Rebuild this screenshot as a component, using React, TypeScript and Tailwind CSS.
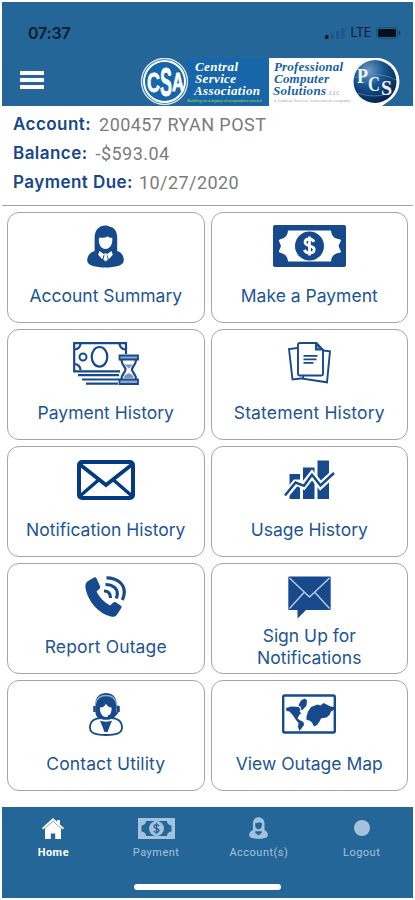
import type { ReactNode } from "react";

const NAVY = "#17498d";

function AccountIcon() {
  return (
    <svg width="37" height="43" viewBox="0 0 37 43" fill={NAVY}>
      <path d="M7.6 26V13C7.6 5 12 .4 18.500 .4c2 0 3 .6 3.800 1.200C27 2.200 30.200 6 30.200 13v13c4 1 6.600 4.500 6.600 9.500 0 5-9 7-18.300 7S.2 40.500.2 35.500C.2 30.500 3.600 27 7.600 26z" />
      <path
        d="M12 12.800c4 .2 7.500-.4 8.800-1.600 1 1.200 2.600 1.700 4.400 1.600.8 5.500-1.800 11.300-6.700 11.300S11.200 18.300 12 12.800z"
        fill="#fff"
      />
      <path d="M12.500 26l4.500 3.200-1.800 5-4-4.500zM24.500 26L20 29.200l1.800 5 4-4.500z" fill="#fff" />
      <path d="M17 28.500h3.200l-.5 2 1.200 4-2.300 2-2.300-2 1.200-4z" fill="#fff" />
    </svg>
  );
}

function MoneyIcon() {
  return (
    <svg width="73" height="42" viewBox="0 0 73 42">
      <rect width="73" height="42" rx="2" fill={NAVY} />
      <path
        d="M15 5.500h43c.3 4.500 2.500 7.500 7 8.500 1 0 3 .5 3 1.500l-2.500 5.500 2.500 5.500c0 1-2 1.500-3 1.500-4.500 1-6.700 4-7 8.500H15c-.3-4.500-2.500-7.500-7-8.500-1.500-.5-2.500-1-2-2l2-5-2-5c-.5-1 .5-1.500 2-2 4.500-1 6.700-4 7-8.500z"
        fill="#fff"
      />
      <circle cx="36.500" cy="21" r="14.500" fill={NAVY} />
      <path
        d="M41 16.800c-1-2-2.700-2.800-4.700-2.800-2.500 0-4.300 1.300-4.300 3.300 0 4.700 9.200 2.500 9.200 7.200 0 2.200-2 3.500-4.700 3.500-2.500 0-4.200-1-5.200-3.200M36.500 11.500v19"
        fill="none"
        stroke="#fff"
        strokeWidth="2.800"
      />
    </svg>
  );
}

function PaymentHistoryIcon() {
  return (
    <svg width="66" height="43" viewBox="0 0 66 43" fill="none" stroke={NAVY}>
      <path d="M1.200 28V1.200H53V12M1.200 28v1.300H47" strokeWidth="2.200" />
      <path
        d="M1.500 7.500c3.500 0 6-2.500 6-6M46.500 1.500c0 3.500 2.500 6 6 6M1.500 22c3.500 0 6 2.500 6 6"
        fill="#8ba6c8"
        strokeWidth="2.200"
      />
      <circle cx="10" cy="15" r="3.500" strokeWidth="2" />
      <ellipse cx="26.500" cy="14.800" rx="7.800" ry="9.800" strokeWidth="2.200" />
      <path d="M5 33.200h41M9 37.500h37M13 41.700h32" strokeWidth="2.200" />
      <path d="M46.500 13.500h18.500v4h-18.500zM46.500 37.500h18.500v4.500h-18.500z" fill="#8ba6c8" strokeWidth="1.800" />
      <path
        d="M48.500 18c0 5 4 6.500 4 9.500s-4 4.500-4 9.500M63 18c0 5-4 6.500-4 9.500s4 4.500 4 9.500"
        strokeWidth="2.200"
      />
      <path d="M51.500 22.500h8.500l-4.200 4zM51 36c0-3 3-4 4.800-5 1.800 1 4.700 2 4.700 5z" fill="#7795bd" stroke="none" />
    </svg>
  );
}

function StatementIcon() {
  return (
    <svg width="43" height="42" viewBox="0 0 43 42" fill="none" stroke={NAVY} strokeWidth="1.900">
      <path d="M9.500 6L1 7l3.500 30.500 10-1.200M35 8.500l7 .8-3 31-24-3.500.3-3" />
      <path d="M12 1h16.500l6.500 7v24c0 1-.5 1.500-1.500 1.500H11.500c-1 0-1.500-.5-1.500-1.500V2.500C10 1.500 10.500 1 12 1z" />
      <path d="M28 1.500V7.500h6.500z" fill="#7795bd" />
      <path d="M15.500 13.800h14M15.500 17.300h13M15.500 20.800h10" strokeWidth="1.800" />
    </svg>
  );
}

function EnvelopeIcon() {
  return (
    <svg width="58" height="40" viewBox="0 0 58 40" fill="none" stroke="#043b7e" strokeWidth="4">
      <rect x="2" y="2" width="54" height="36" rx="3" />
      <path d="M3 4.500l26 20.500 26-20.500" strokeWidth="3.800" />
      <path d="M3 36l18.500-16M55 36L36.500 20" strokeWidth="3.500" />
    </svg>
  );
}

function UsageIcon() {
  return (
    <svg width="51" height="40" viewBox="0 0 51 40">
      <path d="M5.500 14h10.500v25H5.500zM19 7.500h11.500V39H19zM33.500 .5H45V39H33.500z" fill={NAVY} />
      <path
        d="M1 35.500l10.500-12.500 3 0 5 2.800 8.500-11 8.500 10.700L50 13"
        fill="none"
        stroke="#fff"
        strokeWidth="7"
      />
      <path d="M1 35.500l10.500-13 8.500 3.300 8-11 8.500 10.700L50 13" fill="none" stroke={NAVY} strokeWidth="2.500" />
    </svg>
  );
}

function ReportIcon() {
  return (
    <svg width="41" height="42" viewBox="0 0 41 42">
      <path
        d="M3 5l6-3.500c1-.5 2-.2 2.500.8l3.500 8c.4 1 .2 2-.6 2.700L11.500 15.500c3 6 7.500 10.500 13.500 14l3-2.800c.8-.8 1.800-.9 2.700-.4l5 3.200c1 .6 1.200 1.800.5 2.700l-4 6c-1.500 2.300-3.700 3-6.200 2.300C13.500 37.500 3 25.500.5 12 0 9 .8 6.500 3 5z"
        fill={NAVY}
      />
      <g fill="none" stroke={NAVY} strokeWidth="3.200">
        <path d="M21.500 1.800C33 1.800 39.300 8.500 39.300 16c0 3-.8 5.500-2 8" />
        <path d="M20.500 8.500C28 8.500 32.300 12.500 32.300 17.500c0 2-.4 3.500-1 5" />
        <path d="M19 15c4.500 0 6.500 2.500 6.500 7" />
      </g>
    </svg>
  );
}

function SignUpIcon() {
  return (
    <svg width="43" height="43" viewBox="0 0 43 43">
      <path d="M1.500 .5h40c.8 0 1.200.4 1.200 1.200v31c0 .8-.4 1.300-1.200 1.300H18L9.500 42.500V34h-8C.7 34 .3 33.500.3 32.700v-31C.3.9.7.5 1.500.5z" fill={NAVY} />
      <path d="M1.500 2L21.500 21 41.500 2M1.500 32.500L16 16.500M41.500 32.500L27 16.500" fill="none" stroke="#c2d1e4" strokeWidth="1.300" />
    </svg>
  );
}

function ContactIcon() {
  return (
    <svg width="34" height="44" viewBox="0 0 34 44">
      <path d="M6.500 21V11.500C6.500 5 11 1 17 1s10.500 4 10.500 10.500V21c0 2-1.500 4.500-4 5.500H10.500c-2.500-1-4-3.500-4-5.500z" fill={NAVY} />
      <path d="M6.500 12C7.500 6.500 11 3.500 17 3.500S26.500 6.500 27.500 12" fill="none" stroke="#8faacb" strokeWidth="1.300" />
      <path d="M11 15.500c3 0 5-1.500 6-3.800 1.200 2.500 3 3.600 5.500 3.800.5 4-1.500 9.500-5.500 9.500s-6.500-5-6-9.500z" fill="#fff" />
      <path d="M28.500 13.500v7c-2 3-5.500 4-9.500 3.500" fill="none" stroke={NAVY} strokeWidth="1.800" />
      <path d="M5.500 14v6M29.500 14v6" stroke={NAVY} strokeWidth="2.500" />
      <path
        d="M12 26C6 26 1 29 1 35.500S8 43 17 43s16-1 16-7.500S28 26 22 26c-1 1.200-9 1.200-10 0z"
        fill="#fff"
        stroke={NAVY}
        strokeWidth="1.800"
      />
      <path d="M11 28.500c3 1.500 9 1.500 12 0L18.500 40h-3z" fill={NAVY} />
    </svg>
  );
}

function MapIcon() {
  return (
    <svg width="54" height="40" viewBox="0 0 54 40" fill={NAVY}>
      <rect x="1.200" y="1.500" width="51.600" height="37" rx="1.500" fill="none" stroke={NAVY} strokeWidth="2.400" />
      <path d="M4 14l5-1.500 8 .5 1.500 3-1 2 2 1-2 1.500-2 4 2 1.500 4 2 .5 3-3 4-1.500 2-1.500-4 .5-4-2.500-3-3-4.500-3.500-4-3-.5z" />
      <path d="M17.500 9l2-3 3.500-1.500 2 2-.5 5-3 3.500-2 1.500-1-4-2-.5z" />
      <path d="M24.500 22.500l1.500-5 3-4.500 4-1.500 2.500-1 3 1 3-2.500 4 2 3 1.500 4.500.5.500 2-4.500 2.500-1.500 3.500-3 2.500-3.500.5-2 .5-1.500 3-2.500 3.500-3 1.500-2-4-2.500-2-3-.5z" />
    </svg>
  );
}

function HeaderLogos() {
  return (
    <svg width="260" height="48" viewBox="140 58 260 48" fontFamily="Liberation Serif, serif" fontWeight="bold" fontStyle="italic">
      <defs>
        <radialGradient id="globe" cx="0.350" cy="0.250" r="0.800">
          <stop offset="0" stopColor="#6d9cc8" />
          <stop offset="0.450" stopColor="#17558f" />
          <stop offset="1" stopColor="#061f4a" />
        </radialGradient>
      </defs>

      <rect x="186" y="58" width="83" height="48" fill="#1666a9" />
      <circle cx="164.500" cy="81.500" r="23" fill="#1666a9" stroke="#d8e5f1" strokeWidth="1.400" />
      <circle cx="164.500" cy="81.500" r="20.500" fill="#1666a9" stroke="#fff" strokeWidth="2" />
      <g fontFamily="Liberation Sans, sans-serif" fontStyle="normal" fill="#fff" stroke="#fff" strokeWidth="0.800">
        <text x="147" y="91.500" fontSize="28" textLength="13" lengthAdjust="spacingAndGlyphs">C</text>
        <text x="160" y="96" fontSize="41" textLength="12" lengthAdjust="spacingAndGlyphs">S</text>
        <text x="172" y="90.500" fontSize="25" textLength="12" lengthAdjust="spacingAndGlyphs">A</text>
      </g>
      <g fill="#fff" fontSize="13">
        <text x="195" y="70.500" textLength="43">Central</text>
        <text x="195" y="83" textLength="41">Service</text>
        <text x="194" y="95.300" textLength="66">Association</text>
      </g>
      <text x="187" y="102" fontSize="4.200" fill="#87b945" textLength="75" fontFamily="Liberation Sans, sans-serif">
        Building on a legacy of cooperative service
      </text>

      <path d="M269 58h106a23.500 23.500 0 0 1 16 41.500l-9 6.500H269z" fill="#fff" />
      <circle cx="375" cy="81.500" r="23.500" fill="#fff" />
      <g fill="#17629f" fontSize="13">
        <text x="274" y="70.500" textLength="69">Professional</text>
        <text x="274" y="83" textLength="55">Computer</text>
        <text x="273" y="95.300" textLength="53">Solutions</text>
      </g>
      <text x="329" y="95" fontSize="5.500" fill="#a5b5c5" textLength="11">LLC</text>
      <text x="274" y="102" fontSize="4.200" fill="#8b98a5" fontWeight="normal" textLength="76">
        a Central Service Association company
      </text>
      <circle cx="375" cy="81.500" r="21.500" fill="url(#globe)" />
      <path d="M354 78c12-5 30-5 42 2M358 93c10 4 24 4 34-1" fill="none" stroke="#5d8fc0" strokeWidth="0.700" />
      <g fill="#eef3f7" fontSize="20" fontStyle="normal">
        <text x="357" y="83" textLength="11" lengthAdjust="spacingAndGlyphs">P</text>
        <text x="368" y="90.500" textLength="12" lengthAdjust="spacingAndGlyphs">C</text>
        <text x="381" y="95" textLength="11" lengthAdjust="spacingAndGlyphs">S</text>
      </g>
    </svg>
  );
}

interface TileProps {
  label: ReactNode;
  tracking?: string;
  icon: ReactNode;
}

function Tile({ label, icon, tracking = "" }: TileProps) {
  return (
    <button className="flex h-[111px] flex-col items-center rounded-[12px] border border-[#a5a5a5] bg-white pt-[11px]">
      <span className="flex h-[44px] shrink-0 items-center justify-center">{icon}</span>
      <span
        className={`flex flex-1 items-center pt-[1px] text-center font-['Inter',sans-serif] text-[17.5px] leading-[22px] text-[#1d5592] ${tracking}`}
      >
        {label}
      </span>
    </button>
  );
}

const tiles: TileProps[] = [
  { label: "Account Summary", icon: <AccountIcon /> },
  { label: "Make a Payment", icon: <MoneyIcon /> },
  { label: "Payment History", icon: <PaymentHistoryIcon /> },
  { label: "Statement History", icon: <StatementIcon />, tracking: "tracking-[0.150px]" },
  { label: "Notification History", icon: <EnvelopeIcon /> },
  { label: "Usage History", icon: <UsageIcon /> },
  { label: "Report Outage", icon: <ReportIcon />, tracking: "tracking-[0.150px]" },
  {
    label: (
      <>
        Sign Up for
        <br />
        Notifications
      </>
    ),
    icon: <SignUpIcon />,
  },
  { label: "Contact Utility", icon: <ContactIcon />, tracking: "tracking-[0.100px]" },
  { label: "View Outage Map", icon: <MapIcon /> },
];

const accountRows = [
  { label: "Account:", value: "200457 RYAN POST", gap: "gap-[8px]" },
  { label: "Balance:", value: "-$593.04", gap: "gap-[8px]" },
  { label: "Payment Due:", value: "10/27/2020", gap: "gap-[6px]" },
];

function StatusBar() {
  return (
    <div className="flex items-center justify-between pt-[20px] pr-[12px] pl-[26px]">
      <span className="font-['Inter',sans-serif] text-[16px] leading-[22px] font-semibold tracking-[-0.200px] text-[#0c1c2b]">
        07:37
      </span>
      <div className="flex items-center gap-[5px] text-[#0c1c2b]">
        <svg width="20" height="14" viewBox="0 0 20 14">
          <rect x="0" y="9" width="3.500" height="4" rx="0.800" fill="#0c1c2b" />
          <path d="M5.500 7.500H9V13H5.500zM11 5h3.500v8H11zM16.200 2h3.300v11h-3.300z" fill="#1d5687" />
        </svg>
        <span className="font-['Inter',sans-serif] text-[12.500px] leading-[16px] tracking-[-0.300px]">LTE</span>
        <svg width="25" height="12" viewBox="0 0 25 12">
          <rect x="0.500" y="0.500" width="21" height="11" rx="2.500" fill="none" stroke="#1c5079" />
          <rect x="2" y="2" width="18" height="8" rx="1" fill="#06101a" />
          <rect x="22.800" y="4.200" width="1.400" height="3.600" rx="0.600" fill="#123a5c" />
        </svg>
      </div>
    </div>
  );
}

const navItems = [
  {
    label: "Home",
    active: true,
    icon: (
      <svg width="22" height="21" viewBox="0 0 22 21">
        <path d="M11 0l4 3.700V2h3v4.500L22 10l-1.200 1.500L11 3 1.200 11.500 0 10z" fill="#fff" />
        <path d="M11 3.500l8 7v10.500H13.200v-5.500H8.800v5.500H3V10.500z" fill="#fff" />
      </svg>
    ),
  },
  {
    label: "Payment",
    icon: (
      <svg width="37" height="21" viewBox="0 0 37 21">
        <rect width="37" height="21" fill="#a5c2dc" />
        <path d="M8 3h21c0 2.500 1.500 4 4.500 4.500v6c-3 .5-4.500 2-4.500 4.500H8c0-2.500-1.500-4-4.500-4.500v-6C6.500 7 8 5.500 8 3z" fill="#256699" />
        <circle cx="18.500" cy="10.500" r="7.500" fill="#a5c2dc" />
        <path d="M21 8c-1.500-2-5-1.500-5 .5 0 2.500 5 1.500 5 4 0 2-4 2.500-5.200.5M18.500 5v11" fill="none" stroke="#256699" strokeWidth="1.400" />
      </svg>
    ),
  },
  {
    label: "Account(s)",
    icon: (
      <svg width="19" height="22" viewBox="0 0 37 43">
        <path d="M7.600 26V13C7.600 5 12 .4 18.500 .4S30.200 5 30.200 13v13c4 1 6.600 4.500 6.600 9.500 0 5-9 7-18.300 7S.2 40.500.2 35.500C.2 30.500 3.600 27 7.600 26z" fill="#a5c2dc" />
        <path d="M12 12c4 0 7-.5 8.500-2 1 1.500 3 2 4.700 2 .8 6-1.800 12-6.700 12S11.200 18 12 12z" fill="#256699" />
        <path d="M12 28h13v3l-6.500 5L12 31z" fill="#256699" />
      </svg>
    ),
  },
  {
    label: "Logout",
    icon: <span className="h-[16px] w-[16px] rounded-full bg-[#a5c2dc]" />,
  },
];

export default function App() {
  return (
    <div className="h-[900px] w-[415px] overflow-hidden bg-white px-[2px] pt-[2px]">
      <header className="h-[104px] bg-[#256699]">
        <StatusBar />
        <div className="flex items-start justify-between pt-[14px] pr-[13px] pl-[18px]">
          <button className="mt-[13px] flex w-[24px] flex-col gap-[3px]">
            <span className="h-[4px] bg-white" />
            <span className="h-[4px] bg-white" />
            <span className="h-[4px] bg-white" />
          </button>
          <HeaderLogos />
        </div>
      </header>

      <section className="h-[100px] border-b-[1.500px] border-[#a3a3a3] pt-[4px] pl-[11px]">
        {accountRows.map((row) => (
          <div key={row.label} className={`flex h-[29px] items-center ${row.gap}`}>
            <span className="font-['Inter',sans-serif] text-[17px] font-semibold tracking-[0.450px] text-[#16478c]">
              {row.label}
            </span>
            <span className="font-['Roboto',sans-serif] text-[18px] tracking-[0.450px] text-[#7b7b7b]">{row.value}</span>
          </div>
        ))}
      </section>

      <main className="grid grid-cols-2 gap-x-[6px] gap-y-[6px] pt-[6px] pr-[5px] pl-[5px]">
        {tiles.map((tile, i) => (
          <Tile key={i} {...tile} />
        ))}
      </main>

      <nav className="mt-[16px] flex h-[91px] flex-col items-center bg-[#256699]">
        <div className="grid w-full grid-cols-4 pt-[10px]">
          {navItems.map((item) => (
            <div key={item.label} className="flex flex-col items-center">
              <span className="flex h-[22px] items-center">{item.icon}</span>
              <span
                className={`mt-[7px] font-['Roboto',sans-serif] text-[11px] leading-[14px] tracking-[0.500px] ${
                  item.active ? "font-bold text-white" : "text-[#a5c2dc]"
                }`}
              >
                {item.label}
              </span>
            </div>
          ))}
        </div>
        <span className="mt-[24px] h-[6px] w-[147px] rounded-full bg-white" />
      </nav>
    </div>
  );
}
